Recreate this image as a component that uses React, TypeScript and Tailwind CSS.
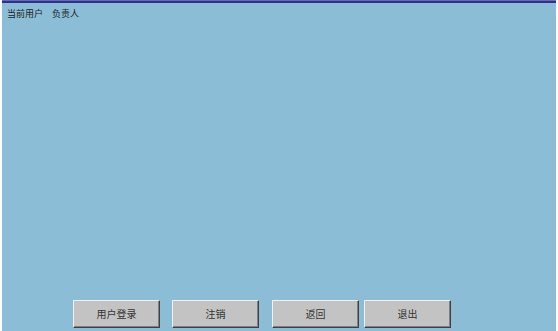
const font = "font-['Liberation_Sans','Noto_Sans_CJK_SC',sans-serif]";

function Btn({ label }: { label: string }) {
  return (
    <button
      className={`h-[28px] w-[87px] bg-[#c3c3c3] text-[10px] text-[#333] border border-t-[#f0f0f0] border-l-[#f0f0f0] border-r-[#404040] border-b-[#404040] shadow-[inset_-1px_-1px_0_#808080] ${font}`}
    >
      {label}
    </button>
  );
}

export default function App() {
  return (
    <div className={`flex h-[331px] w-[558px] bg-white ${font}`}>
      <div className="ml-[2px] flex w-[554px] flex-col bg-[#8bbdd6]">
        {/* top strip */}
        <div className="h-[1px] bg-[#6a6ab0]" />
        <div className="h-[2px] bg-[#2e318a]" />

        <div className="flex gap-[9px] px-[5px] pt-[6px] text-[9px] leading-[11px] text-[#222]">
          <span>当前用户</span>
          <span>负责人</span>
        </div>

        <div className="flex-1" />

        {/* bottom buttons */}
        <div className="flex pb-[3px] pl-[71px]">
          <Btn label="用户登录" />
          <div className="w-[12px]" />
          <Btn label="注销" />
          <div className="w-[13px]" />
          <Btn label="返回" />
          <div className="w-[5px]" />
          <Btn label="退出" />
        </div>
      </div>
    </div>
  );
}
